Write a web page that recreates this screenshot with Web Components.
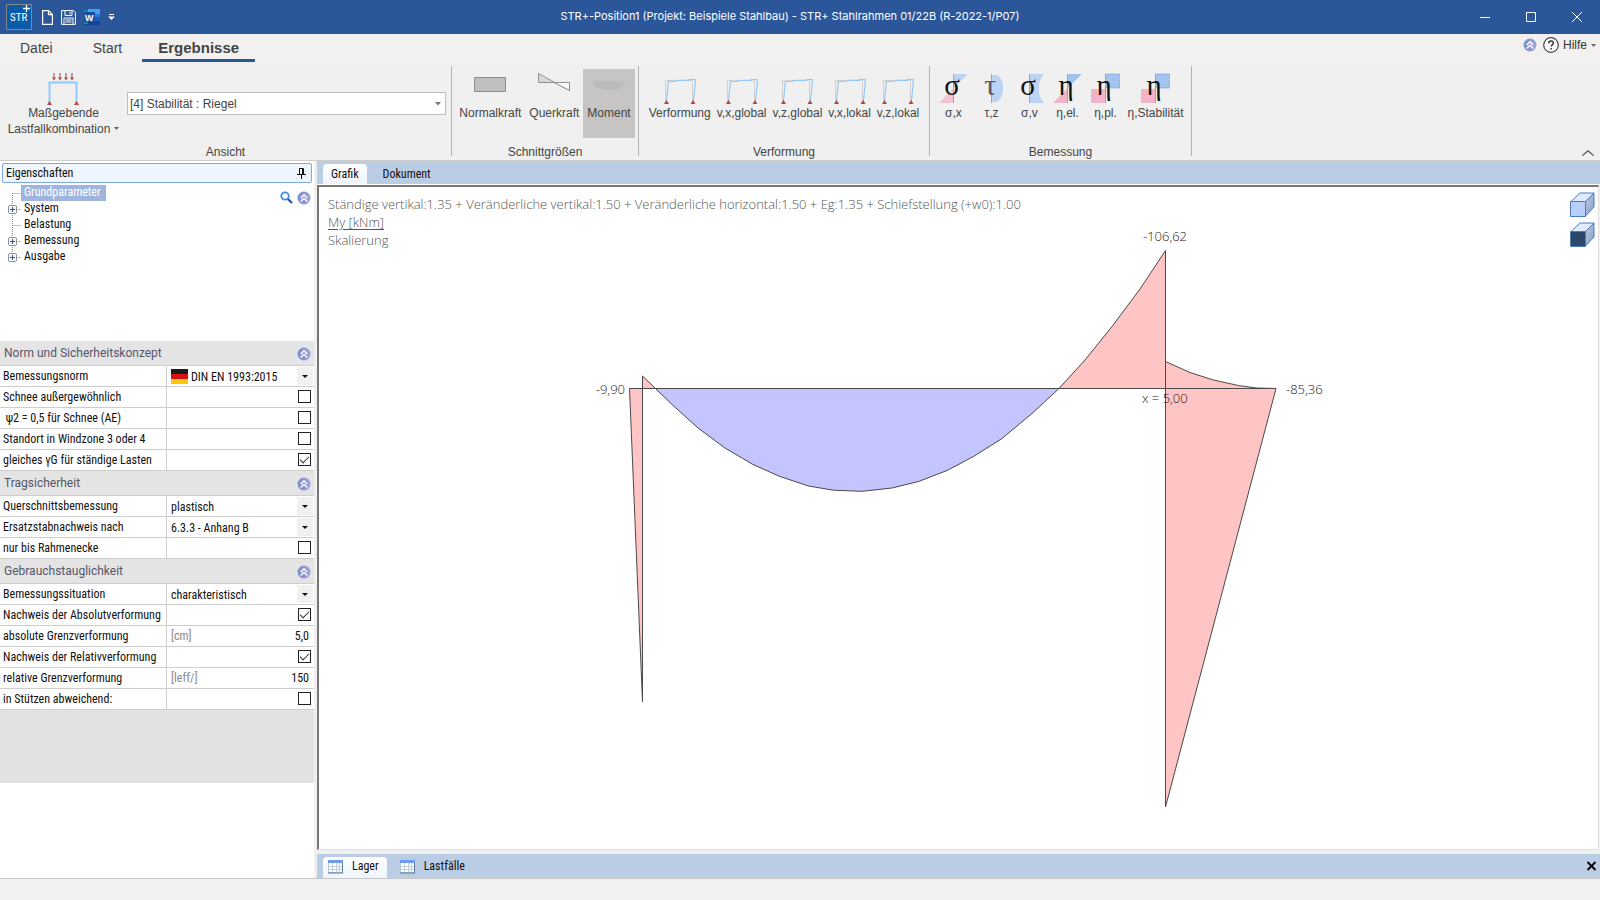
<!DOCTYPE html>
<html lang="de">
<head>
<meta charset="utf-8">
<title>STR+ Stahlrahmen</title>
<style>
html, body { margin: 0; height: 100%; }
body { font-family: "Roboto Condensed", "Liberation Sans", Arial, sans-serif; font-size: 12px; color: #111; background: #f0f0f0; }
</style>
</head>
<body>
<app-window></app-window>

<script>
const BASE = `<style>
*, *::before { box-sizing: border-box; }
button { font: inherit; color: inherit; background: none; border: 0; padding: 0; margin: 0; }
select, input { font: inherit; color: inherit; }
svg { display: block; flex: none; overflow: visible; }
</style>`;

const ROUND = `<svg width="14" height="14" viewBox="0 0 14 14"><defs><linearGradient id="rg" x1="0" y1="0" x2="1" y2="0"><stop offset="0" stop-color="#6f9ad2"/><stop offset=".35" stop-color="#8d8fd0"/><stop offset="1" stop-color="#9aa4dc"/></linearGradient></defs><circle cx="7" cy="7" r="6.5" fill="url(#rg)"/><path d="M3.7 7 7 3.8 10.3 7M3.7 10.4 7 7.2l3.3 3.2" fill="none" stroke="#fff" stroke-width="1.4"/></svg>`;

const SUPPORT = (x, y) => `<path d="M${x - 2.5} ${y + 2}h5L${x} ${y - 2}z" fill="#c0403c"/>`;
const DEFORMED = `<path d="M1.5 29V7.5h27V29" fill="none" stroke="#d2d2d2" stroke-width="1"/><path d="M2.4 29 4.4 8.5l6-.2 4-1H25V6.500h6.200V11L29.300 29" fill="none" stroke="#92c8fb" stroke-width="1.200"/>${SUPPORT(2.5, 29)}${SUPPORT(29, 29)}`;
const GREEK = (c, col) => `<text x="15" y="22" text-anchor="middle" font-family="Liberation Serif, serif" font-size="29" fill="${col || '#111'}">${c}</text>`;
const AXIS = `<path d="M16.500 1v29" stroke="#9aa6b8"/>`;
const ICONS = {
  load: `<path d="M6 0v6M12 0v6M18 0v6M24 0v6" transform="translate(1 0)" stroke="#a86a6a" stroke-width="1.300"/><path d="M5 4.500h4L7 7.500zM11 4.500h4L13 7.500zM17 4.500h4L19 7.500zM23 4.500h4L25 7.500z" fill="#a05050"/><path d="M2.500 30V9.500h27V30" fill="none" stroke="#92c8fb" stroke-width="2"/>${SUPPORT(2.5, 30)}${SUPPORT(29.5, 30)}`,
  normal: `<path d="M.5 4.500h31v14H.5z" fill="#bfbfbf" stroke="#8c8c8c"/>`,
  shear: `<path d="M.5 9.500V1L16 9.500z" fill="#d8d8d8"/><path d="M.5 9.500h31V17.500L.5.5z" fill="none" stroke="#8f8f8f"/><path d="M16 9.500h15.500v8z" fill="#fafafa" stroke="#8f8f8f"/>`,
  moment: `<path d="M0 8h32v3c-2 2-4 3-6 4-3 1.500-6 2-10 2s-8-.5-11-2C3 14 1 12 0 11z" fill="#bbbbbd"/>`,
  frame: DEFORMED,
  sx: `<path d="M16.500 1H31L16.500 15z" fill="#bcd3f3"/><path d="M16.500 15v15H2z" fill="#f6c3d4"/>${AXIS}${GREEK('σ')}`,
  tz: `<path d="M17 2h5c4 2 6 7 6 13s-2 12-6 14h-5z" fill="#bcd3f3"/>${AXIS}${GREEK('τ', '#5c5c60')}`,
  sv: `<path d="M16.500 1H31c-7 8-7 21 0 29H16.500z" fill="#bcd3f3"/>${AXIS}${GREEK('σ')}`,
  el: `<path d="M16.500 1H31L16.500 15z" fill="#9fc2ee"/><path d="M16.500 15v15H2z" fill="#f3b4ca"/>${AXIS}${GREEK('η')}`,
  pl: `<path d="M16.500 1h14v14h-14z" fill="#a3c4ef" stroke="#6e94cc" stroke-dasharray="1 1"/><path d="M2 16h14.500v14H2z" fill="#f3b4ca"/>${AXIS}${GREEK('η')}`
};

const TABLE_ICON = `<svg width="16" height="14" viewBox="0 0 16 14"><path d="M.5.5h14v12H.5z" fill="#fff" stroke="#b4c4da"/><path d="M0 0h15v3H0z" fill="#6f9bec"/><path d="M1 6.500h14M1 9.500h14M4.500 3v10M8.500 3v10M11.500 3v10" stroke="#c3cfde"/><path d="M14.500 3v10H0" fill="none" stroke="#5a78a0"/></svg>`;

function define(name, render) {
  customElements.define(name, class extends HTMLElement {
    connectedCallback() {
      if (this.shadowRoot) return;
      this.attachShadow({ mode: 'open' }).innerHTML = BASE + render(this);
    }
  });
}

define('title-bar', () => `<style>
:host { display: flex; height: 34px; background: #2b579a; color: #fff; font: 11px/32px Inter, "Open Sans", sans-serif; }
.quick { display: flex; width: 118px; align-items: center; padding-left: 6px; gap: 8px; }
.logo { margin-right: 2px; }
h1 { flex: 1; margin: 0; font: inherit; text-align: center; white-space: nowrap; overflow: hidden; }
.win { display: flex; }
.win button { width: 46px; display: grid; place-items: center; }
</style>
<div class="quick">
 <svg class="logo" width="26" height="26" viewBox="0 0 26 26"><path d="M.5.5h25v25H.5z" fill="#0a5ca8" stroke="#85868a"/><text x="4" y="17" font-family="Roboto Condensed, sans-serif" font-size="11" fill="#fff">STR</text><path d="M20.500 1v7M17 4.500h7" stroke="#fff" stroke-width="1.300"/></svg>
 <button aria-label="Neu"><svg width="11" height="15" viewBox="0 0 11 15"><path d="M.6.600h6l3.800 4v9.800H.6zM6.500.600v4h4" fill="none" stroke="#fff" stroke-width="1.200"/></svg></button>
 <button aria-label="Speichern"><svg width="15" height="15" viewBox="0 0 15 15"><path d="M.6.600h11.800l2 2v11.800H.6zM4 .6v4.800h7V.6M3 14V8h9v6M9 2v2M4.500 10h6M4.500 12h6" fill="none" stroke="#fff" stroke-width="1"/></svg></button>
 <button aria-label="Word"><svg width="16" height="16" viewBox="0 0 16 16"><path d="M4 0h12v5H4z" fill="#41a5ee"/><path d="M4 5h12v3H4z" fill="#2b7cd3"/><path d="M4 8h12v4H4z" fill="#185abd"/><path d="M4 12h12v4H0v-3z" fill="#12439a"/><path d="M0 1h4v14H0z" fill="#0f8a80"/><path d="M0 3h11v10H0z" fill="#1e4fa3"/><text x="1" y="12" font-family="Liberation Sans, sans-serif" font-weight="700" font-size="9" fill="#fff">W</text></svg></button>
 <button aria-label="Anpassen"><svg width="7" height="6" viewBox="0 0 7 6"><path d="M1 .5h5" stroke="#fff"/><path d="M0 2.500h7L3.500 6z" fill="#fff"/></svg></button>
</div>
<h1>STR+-Position1 (Projekt: Beispiele Stahlbau) - STR+ Stahlrahmen 01/22B (R-2022-1/P07)</h1>
<div class="win">
 <button aria-label="Minimieren"><svg width="10" height="10"><path d="M0 5.500h10" stroke="#fff"/></svg></button>
 <button aria-label="Maximieren"><svg width="10" height="10"><path d="M.5.500h9v9h-9z" fill="none" stroke="#fff"/></svg></button>
 <button aria-label="Schließen"><svg width="10" height="10"><path d="M0 0l10 10M10 0L0 10" stroke="#fff"/></svg></button>
</div>`);

define('ribbon-tabs', () => `<style>
:host { display: flex; height: 28px; background: #f2f1f0; color: #444; font: 14px/28px "Liberation Sans", Arial, sans-serif; }
nav { display: flex; flex: 1; }
nav button { padding: 0 20px; }
nav .on { padding: 2px 16px 0; font-size: 15px; font-weight: 700; border-bottom: 3px solid #2b579a; line-height: 23px; }
.help { display: flex; align-items: center; gap: 6px; padding-right: 4px; font-size: 12px; line-height: 22px; height: 22px; color: #333; }
.help button { display: flex; align-items: center; gap: 4px; }
</style>
<nav><button>Datei</button><button>Start</button><button class="on">Ergebnisse</button></nav>
<div class="help"><button aria-label="Einklappen">${ROUND}</button>
<button><svg width="16" height="16" viewBox="0 0 16 16"><circle cx="8" cy="8" r="7.300" fill="#fff" stroke="#444" stroke-width="1.200"/><path d="M5.700 6.300c0-3.200 4.700-3 4.700-.3 0 1.800-2.300 1.800-2.300 3.600M8.100 11v1.600" fill="none" stroke="#333" stroke-width="1.500"/></svg>Hilfe<svg width="5" height="3"><path d="M0 0h5L2.500 3z" fill="#666"/></svg></button></div>`);

define('ribbon-button', el => `<style>
:host { display: flex; }
button { display: flex; flex-direction: column; align-items: center; min-width: 38px; height: 69px; padding: 4px var(--pad, 3px) 0; line-height: 16px; white-space: nowrap; }
:host([pressed]) button { background: #c6c5c4; }
svg.arrow { display: inline-block; margin-left: 4px; vertical-align: 3px; }
</style>
<button><svg width="32" height="32" viewBox="0 0 32 32">${ICONS[el.getAttribute('icon')]}</svg><span><slot></slot>${el.hasAttribute('menu') ? '<svg class="arrow" width="5" height="3"><path d="M0 0h5L2.500 3z" fill="#666"/></svg>' : ''}</span></button>`);

define('ribbon-group', el => `<style>
:host { display: flex; width: var(--w); height: 98px; }
section { flex: 1; display: flex; flex-direction: column; min-width: 0; }
.items { display: flex; justify-content: center; padding-top: 7px; height: 76px; }
h2 { margin: 6px 0 0; font: inherit; line-height: 16px; text-align: center; }
i { width: 1px; margin: 4px 0; background: #b4b4b4; }
</style>
<section><div class="items"><slot></slot></div><h2>${el.getAttribute('label')}</h2></section><i></i>`);

define('ribbon-bar', () => `<style>
:host { display: flex; height: 99px; background: #f0f0f0; border-bottom: 1px solid #cfcdca; color: #444; font: 12px/16px "Liberation Sans", Arial, sans-serif; }
.combo { flex: 1; align-self: flex-start; margin: 23px 5px 0 0; position: relative; }
.combo select { display: block; width: 100%; height: 23px; appearance: none; border: 1px solid #bdbdbd; border-radius: 0; background: #fff; padding: 0 2px; outline: 0; }
.combo svg { position: absolute; right: 5px; top: 10px; }
.big { justify-content: center; width: 127px; }
.collapse { margin: auto 6px 4px auto; }
</style>
<ribbon-group label="Ansicht" style="--w:452px">
 <ribbon-button class="big" icon="load" menu style="text-align:center">Maßgebende<br>Lastfallkombination</ribbon-button>
 <div class="combo"><select aria-label="Lastfallkombination"><option>[4] Stabilität : Riegel</option></select><svg width="6" height="4"><path d="M0 0h6L3 3.500z" fill="#777"/></svg></div>
</ribbon-group>
<ribbon-group label="Schnittgrößen" style="--w:187px;--pad:4px">
 <ribbon-button icon="normal">Normalkraft</ribbon-button><ribbon-button icon="shear">Querkraft</ribbon-button><ribbon-button icon="moment" pressed>Moment</ribbon-button>
</ribbon-group>
<ribbon-group label="Verformung" style="--w:291px">
 <ribbon-button icon="frame">Verformung</ribbon-button><ribbon-button icon="frame">v,x,global</ribbon-button><ribbon-button icon="frame">v,z,global</ribbon-button><ribbon-button icon="frame">v,x,lokal</ribbon-button><ribbon-button icon="frame">v,z,lokal</ribbon-button>
</ribbon-group>
<ribbon-group label="Bemessung" style="--w:262px">
 <ribbon-button icon="sx">σ,x</ribbon-button><ribbon-button icon="tz">τ,z</ribbon-button><ribbon-button icon="sv">σ,v</ribbon-button><ribbon-button icon="el">η,el.</ribbon-button><ribbon-button icon="pl">η,pl.</ribbon-button><ribbon-button icon="pl">η,Stabilität</ribbon-button>
</ribbon-group>
<button class="collapse" aria-label="Menüband reduzieren"><svg width="12" height="6"><path d="M.5 5.500 6 .8l5.500 4.700" fill="none" stroke="#555" stroke-width="1.200"/></svg></button>`);

define('tree-node', el => `<style>
:host { display: flex; height: 16px; line-height: 15px; }
span { padding: 0 5px 0 3px; }
:host([selected]) span { background: #9fb5df; color: #fff; }
</style>
<svg width="21" height="16" viewBox="0 0 21 16"><path d="M12.500 ${el.hasAttribute('selected') ? 8 : 0}V${el.hasAttribute('last') ? 8 : 16}M12.500 8.500H21" fill="none" stroke="#888" stroke-dasharray="1 1"/>${el.hasAttribute('branch') ? '<rect x="8.500" y="4.500" width="8" height="8" rx="1" fill="#f6f6f6" stroke="#8f8f8f"/><path d="M10 8.500h5M12.500 6v5" stroke="#3c5a9c"/>' : ''}</svg><span><slot></slot></span>`);

define('prop-section', el => `<style>
:host { display: block; }
h3 { display: flex; align-items: center; justify-content: space-between; height: 25px; margin: 0; padding: 1px 3px 0 4px; background: #e4e4e4; border-bottom: 1px solid #cecece; color: #56566a; font: 12px/23px Roboto, sans-serif; }
</style><h3>${el.getAttribute('label')}<button aria-label="Einklappen">${ROUND}</button></h3><slot></slot>`);

define('prop-row', el => {
  const a = n => el.getAttribute(n);
  let value = '';
  if (a('type') === 'select') value = (el.hasAttribute('flag') ? '<svg class="flag" width="17" height="15"><path d="M0 0h17v5H0z" fill="#1c1c1c"/><path d="M0 5h17v5H0z" fill="#d81212"/><path d="M0 10h17v5H0z" fill="#fbc70a"/></svg>' : '') + `<select id="c"><option>${a('value')}</option></select><b><svg width="6" height="3"><path d="M0 0h6L3 3z" fill="#111"/></svg></b>`;
  else if (a('type') === 'check') value = `<input id="c" type="checkbox"${el.hasAttribute('checked') ? ' checked' : ''}>`;
  else value = `<em>${a('unit')}</em><input id="c" type="text" value="${a('value')}">`;
  return `<style>
:host { display: grid; grid-template-columns: 166px 1fr; height: 21px; border-bottom: 1px solid #cecece; background: #fff; line-height: 20px; }
label { padding-left: 3px; white-space: nowrap; overflow: hidden; }
div { display: flex; align-items: center; border-left: 1px solid #cecece; padding-left: 4px; min-width: 0; }
.flag { margin-right: 3px; }
select { flex: 1; min-width: 0; height: 20px; padding: 1px 0 0; appearance: none; border: 0; background: none; outline: 0; }
b { display: grid; place-items: center; width: 16px; height: 18px; margin-right: 1px; background: #f0f0f0; }
em { font-style: normal; color: #8a8a8a; }
input[type=text] { flex: 1; min-width: 0; width: 40px; border: 0; padding: 0; margin-right: 5px; text-align: right; background: none; outline: 0; }
input[type=checkbox] { appearance: none; width: 13px; height: 13px; margin: 0 3px 1px auto; border: 1px solid #222; background: #fff; display: grid; place-items: center; }
input:checked::before { content: ""; width: 9px; height: 5px; border: solid #333; border-width: 0 0 1px 1px; transform: translateY(-1px) rotate(-45deg); }
</style><label for="c">${a('label')}</label><div>${value}</div>`;
});

define('side-panel', () => `<style>
:host { display: flex; flex-direction: column; background: #fff; min-height: 0; overflow: hidden; }
header { display: flex; align-items: center; justify-content: space-between; height: 20px; margin: 2px 2px 2px; padding: 0 5px 0 3px; border: 1px solid #7fa9e4; border-radius: 2px; background: #eef5fd; flex: none; }
h2 { margin: 0; font: inherit; }
.top { display: flex; justify-content: space-between; height: 156px; flex: none; }
.tools { display: flex; align-items: flex-start; gap: 4px; padding: 6px 3px 0 0; }
.rest { height: 73px; background: #e2e2e2; flex: none; }
</style>
<header><h2>Eigenschaften</h2><button aria-label="Anheften"><svg width="9" height="11" viewBox="0 0 9 11"><path d="M2.500 6V.5h4V6M5.500 1v5M0 6.500h9M4.500 7v4" fill="none" stroke="#111"/></svg></button></header>
<div class="top"><div role="tree">
<tree-node selected>Grundparameter</tree-node><tree-node branch>System</tree-node><tree-node>Belastung</tree-node><tree-node branch>Bemessung</tree-node><tree-node branch last>Ausgabe</tree-node>
</div><div class="tools"><button aria-label="Suchen"><svg width="13" height="13" viewBox="0 0 13 13"><circle cx="5" cy="5" r="3.700" fill="#fff" stroke="#3e8fd8" stroke-width="1.800"/><path d="M8 8l4 4" stroke="#2a4f9a" stroke-width="2.300"/></svg></button><button aria-label="Alle einklappen">${ROUND}</button></div></div>
<prop-section label="Norm und Sicherheitskonzept">
<prop-row label="Bemessungsnorm" type="select" flag value="DIN EN 1993:2015"></prop-row>
<prop-row label="Schnee außergewöhnlich" type="check"></prop-row>
<prop-row label="&nbsp;ψ2 = 0,5 für Schnee (AE)" type="check"></prop-row>
<prop-row label="Standort in Windzone 3 oder 4" type="check"></prop-row>
<prop-row label="gleiches γG für ständige Lasten" type="check" checked></prop-row>
</prop-section>
<prop-section label="Tragsicherheit">
<prop-row label="Querschnittsbemessung" type="select" value="plastisch"></prop-row>
<prop-row label="Ersatzstabnachweis nach" type="select" value="6.3.3 - Anhang B"></prop-row>
<prop-row label="nur bis Rahmenecke" type="check"></prop-row>
</prop-section>
<prop-section label="Gebrauchstauglichkeit">
<prop-row label="Bemessungssituation" type="select" value="charakteristisch"></prop-row>
<prop-row label="Nachweis der Absolutverformung" type="check" checked></prop-row>
<prop-row label="absolute Grenzverformung" type="text" unit="[cm]" value="5,0"></prop-row>
<prop-row label="Nachweis der Relativverformung" type="check" checked></prop-row>
<prop-row label="relative Grenzverformung" type="text" unit="[leff/]" value="150"></prop-row>
<prop-row label="in Stützen abweichend:" type="check"></prop-row>
</prop-section>
<div class="rest"></div>`);

define('tab-strip', () => `<style>
:host { display: flex; height: 24px; padding: 3px 4px 0 6px; background: #bbcde5; }
div { display: flex; flex: 1; gap: 8px; }
</style><div><slot></slot></div><slot name="end"></slot>`);

define('strip-tab', el => `<style>
:host { display: flex; }
button { display: flex; align-items: center; gap: 8px; padding: 0 ${el.hasAttribute('table') ? '8px 2px 5px' : '8px'}; line-height: 19px; border-radius: 4px 4px 0 0; }
:host([on]) button { background: linear-gradient(#fff, #eef5fd); }
</style><button>${el.hasAttribute('table') ? TABLE_ICON : ''}<slot></slot></button>`);

const cube = face => `<svg width="25" height="25" viewBox="0 0 25 25"><defs><linearGradient id="side" x1="0" y1="0" x2="1" y2="1"><stop offset="0" stop-color="#b9c8e4"/><stop offset="1" stop-color="#8d9dc0"/></linearGradient></defs><path d="M1 9.500 10 1h14l-8.500 8.500z" fill="#e2ebfb" stroke="#4b7dbd"/><path d="M15.500 9.500 24 1v14l-8.500 9z" fill="url(#side)" stroke="#4b7dbd"/><path d="M.5 9.500h15v15H.5z" fill="${face}" stroke="#4b7dbd"/></svg>`;

define('moment-view', () => `<style>
:host { display: block; position: relative; flex: 1; min-height: 0; background: #fff; border: solid #e0e0e0; border-width: 0 1px 1px 0; border-left: 2px solid #777; border-top: 2px solid #777; font: 300 13px/18px "Open Sans", "Noto Sans", sans-serif; color: #555; }
.plot { position: absolute; inset: 0; width: 100%; height: 100%; }
.info { position: relative; padding: 8px 9px; }
p { margin: 0; }
a { color: inherit; text-decoration: underline; text-underline-offset: 2px; }
.views { position: absolute; right: 3px; top: 5px; display: grid; gap: 5px; }
text { fill: #222; }
</style>
<svg class="plot" viewBox="319 187 1279 662">
<g stroke="none">
<path fill="#ffc4c4" d="M629.500 388.500h13V702zM642.500 376l13 12.500h-13zM1058.500 388.500 1085 360l27-33.500 28-37.500 25.500-38.500v111l24.500 11 23.500 7.500 25 5.500 18 2.500 19.500.5-110.500 418.500v-418.500z"/>
<path fill="#c4c4ff" d="M655.500 388.500 672 404.500l26 23.500 27 20 28 16.500 27 12 28.500 9.500 25 4.200 28.500 1.100 30-3.300 26.500-6.500 28.500-11 26.500-14 28.500-18 30-25 27-25z"/>
</g>
<g fill="none" stroke="#4a4a4a">
<path d="M629.500 388.500h646.500M642.500 702V376M642.500 702l-13-313.500M642.500 376 655.500 388.500 672 404.500l26 23.500 27 20 28 16.500 27 12 28.500 9.500 25 4.200 28.500 1.100 30-3.300 26.500-6.500 28.500-11 26.500-14 28.500-18 30-25 27-25L1085 360l27-33.500 28-37.500 25.500-38.500V807L1276 388.500M1165.500 361.500l24.500 11 23.500 7.500 25 5.500 18 2.500 19.500.500"/>
</g>
<text x="1165" y="241" text-anchor="middle">-106,62</text>
<text x="625" y="394" text-anchor="end">-9,90</text>
<text x="1286" y="394">-85,36</text>
<text x="1142" y="403">x = 5,00</text>
</svg>
<div class="info"><p>Ständige vertikal:1.35 + Veränderliche vertikal:1.50 + Veränderliche horizontal:1.50 + Eg:1.35 + Schiefstellung (+w0):1.00</p><p><a href="#my">My [kNm]</a></p><p>Skalierung</p></div>
<div class="views"><button aria-label="Ansicht hell">${cube('#b9cffb')}</button><button aria-label="Ansicht dunkel">${cube('#2b4769')}</button></div>`);

define('app-window', () => `<style>
:host { display: flex; flex-direction: column; height: 100vh; overflow: hidden; }
main { flex: 1; min-height: 0; display: grid; grid-template-columns: 314px 1fr; column-gap: 3px; }
.work { display: flex; flex-direction: column; min-width: 0; padding-right: 1px; }
.work > tab-strip { margin-right: -1px; flex: none; }
.upper { border-bottom: 1px solid #fff; }
.lower { margin-top: 4px; }
footer { height: 22px; background: #f2f1ef; border-top: 1px solid #c6c6c6; flex: none; }
.close { align-self: center; margin-bottom: 4px; }
</style>
<title-bar></title-bar><ribbon-tabs></ribbon-tabs><ribbon-bar></ribbon-bar>
<main><side-panel></side-panel>
<div class="work">
<tab-strip class="upper"><strip-tab on>Grafik</strip-tab><strip-tab>Dokument</strip-tab></tab-strip>
<moment-view></moment-view>
<tab-strip class="lower"><strip-tab table on>Lager</strip-tab><strip-tab table>Lastfälle</strip-tab>
<button slot="end" class="close" aria-label="Schließen"><svg width="9" height="8"><path d="M.5 0l8 8M8.500 0l-8 8" stroke="#000" stroke-width="1.800"/></svg></button></tab-strip>
</div></main><footer></footer>`);
</script>
</body>
</html>
